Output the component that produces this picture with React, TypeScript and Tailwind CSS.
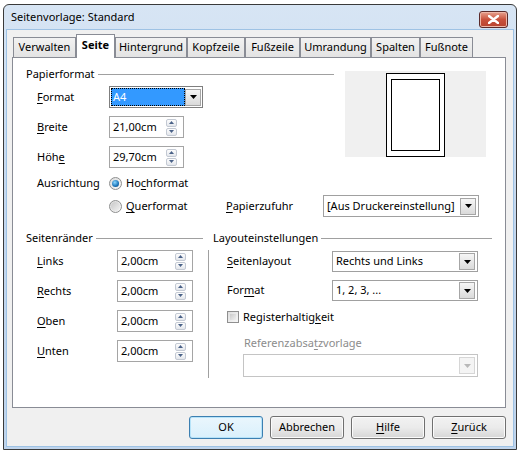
import React from 'react';

const U = ({ children }: { children: React.ReactNode }) => (
  <span className="underline underline-offset-[2px]">{children}</span>
);

const Tri = ({ up, color = '#4a6288' }: { up?: boolean; color?: string }) => (
  <svg width="5" height="3" viewBox="0 0 5 3">
    <path d={up ? 'M0 3L2.5 0L5 3Z' : 'M0 0H5L2.5 3Z'} fill={color} />
  </svg>
);

const Spin = () => (
  <div className="flex flex-col gap-px">
    <div className="flex h-[8px] w-[11px] items-center justify-center rounded-[2px] border border-[#c3c9d3] bg-gradient-to-b from-[#fdfdfd] to-[#e4e7ec]">
      <Tri up />
    </div>
    <div className="flex h-[8px] w-[11px] items-center justify-center rounded-[2px] border border-[#c3c9d3] bg-gradient-to-b from-[#fdfdfd] to-[#e4e7ec]">
      <Tri />
    </div>
  </div>
);

const SpinField = ({ value, className }: { value: string; className: string }) => (
  <div className={`flex h-[22px] items-center justify-between border border-[#a5a5a5] bg-white pl-[3px] pr-[6px] ${className}`}>
    <span>{value}</span>
    <Spin />
  </div>
);

const DropBtn = ({ disabled }: { disabled?: boolean }) => (
  <div
    className={`ml-auto flex h-[17px] w-[16px] items-center justify-center border ${
      disabled ? 'border-[#d6d6d6] bg-[#f4f4f4]' : 'border-[#a6a6a6] bg-gradient-to-b from-[#f6f6f6] to-[#dadada]'
    }`}
  >
    <svg width="7" height="4" viewBox="0 0 7 4">
      <path d="M0 0H7L3.5 4Z" fill={disabled ? '#b8b8b8' : '#000'} />
    </svg>
  </div>
);

const Combo = ({ text, className, disabled }: { text?: string; className: string; disabled?: boolean }) => (
  <div
    className={`flex items-center border bg-white pl-[3px] pr-[2px] ${
      disabled ? 'border-[#c4c4c4]' : 'border-[#a0a0a0]'
    } ${className}`}
  >
    <span className="whitespace-nowrap">{text}</span>
    <DropBtn disabled={disabled} />
  </div>
);

const Radio = ({ checked }: { checked?: boolean }) => (
  <div className="flex h-[13px] w-[13px] items-center justify-center rounded-full border border-[#8e8f8f] bg-gradient-to-br from-[#dcdcdc] to-[#f8f8f8]">
    {checked ? (
      <div className="h-[7px] w-[7px] rounded-full bg-[radial-gradient(circle_at_40%_35%,#8ad7ff,#1a73b8_60%,#0b3f6e)]" />
    ) : (
      <div className="h-[9px] w-[9px] rounded-full bg-gradient-to-br from-[#c8c8c8] to-[#f2f2f2]" />
    )}
  </div>
);

const Header = ({ label, className }: { label: string; className: string }) => (
  <div className={`flex h-[16px] items-center ${className}`}>
    <span className="whitespace-nowrap">{label}</span>
    <div className="ml-[3px] h-px flex-1 bg-[#a0a0a0]" />
  </div>
);

const tabs: { label: string; w: string; active?: boolean }[] = [
  { label: 'Verwalten', w: 'w-[63px]' },
  { label: 'Seite', w: 'w-[39px]', active: true },
  { label: 'Hintergrund', w: 'w-[72px]' },
  { label: 'Kopfzeile', w: 'w-[58px]' },
  { label: 'Fußzeile', w: 'w-[55px]' },
  { label: 'Umrandung', w: 'w-[71px]' },
  { label: 'Spalten', w: 'w-[49px]' },
  { label: 'Fußnote', w: 'w-[53px]' },
];

const Btn = ({ children, primary }: { children: React.ReactNode; primary?: boolean }) => (
  <div
    className={`flex h-[23px] w-[74px] items-center justify-center rounded-[3px] border ${
      primary
        ? 'border-[#3c7fb1] shadow-[inset_0_0_0_1px_#b6e3f9] bg-gradient-to-b from-[#eaf6fd] to-[#d9f0fc]'
        : 'border-[#707070] shadow-[inset_0_0_0_1px_#fbfbfb] bg-gradient-to-b from-[#f2f2f2] via-[#ebebeb] to-[#d6d6d6]'
    }`}
  >
    {children}
  </div>
);

export default function App() {
  return (
    <div className="h-[452px] w-[519px] bg-white pl-[3px] pt-[4px] font-['Noto_Sans',sans-serif] text-[11px] text-black">
      <div className="flex h-[446px] w-[514px] flex-col rounded-t-[6px] border border-[#3a3a3a] bg-gradient-to-b from-[#d7e5f4] via-[#c4d7ee] to-[#bfd4ec]">
        {/* title bar */}
        <div className="flex h-[24px] items-center justify-between pl-[7px] pr-[8px]">
          <span className="text-[11px] text-black">Seitenvorlage: Standard</span>
          <div className="mt-[4px] flex h-[17px] w-[29px] items-center justify-center rounded-[3px] border border-[#5b2a2a] bg-gradient-to-b from-[#e6a18f] via-[#c9513c] to-[#b8432f] shadow-[inset_0_0_0_1px_#eeb7a8]">
            <svg width="11" height="9" viewBox="0 0 11 9">
              <path d="M1 1L10 8M10 1L1 8" stroke="#fff" strokeWidth="2.4" strokeLinecap="round" />
            </svg>
          </div>
        </div>

        {/* client */}
        <div className="mx-[2px] mb-[2px] flex-1 border border-[#9ec2e4] bg-[#f0f0f0] pl-[5px]">
          {/* tabs */}
          <div className="relative z-10 mt-[4px] -mb-px flex h-[24px] items-end pl-px">
            {tabs.map((t) =>
              t.active ? (
                <div
                  key={t.label}
                  className={`flex h-[24px] items-center justify-center border border-b-0 border-[#898c95] bg-white pb-[2px] font-bold ${t.w}`}
                >
                  {t.label}
                </div>
              ) : (
                <div
                  key={t.label}
                  className={`flex h-[21px] items-center justify-center border border-[#898c95] bg-gradient-to-b from-[#f2f2f2] to-[#e3e3e3] ${t.w}`}
                >
                  {t.label}
                </div>
              )
            )}
          </div>

          {/* panel */}
          <div className="h-[351px] w-[494px] border border-[#898c95] bg-white">
            <div className="flex">
              <div className="ml-[13px] w-[308px]">
                <Header label="Papierformat" className="mt-[8px]" />
                <div className="mt-[4px] flex items-center">
                  <span className="ml-[11px] w-[72px]">
                    <U>F</U>ormat
                  </span>
                  <div className="flex h-[22px] w-[94px] items-center border border-[#7f7f7f] bg-white p-px">
                    <div className="flex h-full flex-1 items-center bg-[#3399ff] pl-[2px] text-white outline outline-1 -outline-offset-1 outline-dotted outline-black">
                      A4
                    </div>
                    <DropBtn />
                  </div>
                </div>
                <div className="mt-[8px] flex items-center">
                  <span className="ml-[11px] w-[72px]">
                    <U>B</U>reite
                  </span>
                  <SpinField value="21,00cm" className="w-[75px]" />
                </div>
                <div className="mt-[8px] flex items-center">
                  <span className="ml-[11px] w-[72px]">
                    Höh<U>e</U>
                  </span>
                  <SpinField value="29,70cm" className="w-[75px]" />
                </div>
                <div className="mt-[6px] flex h-[18px] items-center">
                  <span className="ml-[11px] w-[72px]">Ausrichtung</span>
                  <Radio checked />
                  <span className="ml-[4px]">
                    Ho<U>c</U>hformat
                  </span>
                </div>
              </div>
              <div className="ml-[11px] mt-[13px] flex h-[86px] w-[141px] justify-center bg-[#f0f0f0] pt-[2px]">
                <div className="flex h-[84px] w-[59px] border border-black bg-white px-[4px] pb-[5px] pt-[5px]">
                  <div className="flex-1 border border-black" />
                </div>
              </div>
            </div>

            <div className="mt-[3px] flex h-[22px] items-center pl-[96px]">
              <div className="flex w-[117px] items-center">
                <Radio />
                <span className="ml-[4px]">
                  <U>Q</U>uerformat
                </span>
              </div>
              <span className="w-[97px]">
                <U>P</U>apierzufuhr
              </span>
              <Combo text="[Aus Druckereinstellung]" className="h-[22px] w-[156px]" />
            </div>

            <div className="mt-[13px] flex">
              <Header label="Seitenränder" className="ml-[13px] w-[177px]" />
              <Header label="Layouteinstellungen" className="ml-[10px] w-[279px]" />
            </div>

            <div className="mt-[4px] flex">
              <div className="flex w-[195px] flex-col gap-[8px]">
                {[
                  ['L', 'inks'],
                  ['R', 'echts'],
                  ['O', 'ben'],
                  ['U', 'nten'],
                ].map(([a, b]) => (
                  <div key={a} className="flex items-center">
                    <span className="ml-[24px] w-[80px]">
                      <U>{a}</U>
                      {b}
                    </span>
                    <SpinField value="2,00cm" className="w-[76px]" />
                  </div>
                ))}
              </div>
              <div className="h-[128px] border-l border-[#a0a0a0] pl-[18px]">
                <div className="mt-px flex items-center">
                  <span className="w-[105px]">
                    <U>S</U>eitenlayout
                  </span>
                  <Combo text="Rechts und Links" className="h-[21px] w-[146px]" />
                </div>
                <div className="mt-[8px] flex items-center">
                  <span className="w-[105px]">
                    For<U>m</U>at
                  </span>
                  <Combo text="1, 2, 3, ..." className="h-[21px] w-[146px]" />
                </div>
                <div className="mt-[9px] flex h-[14px] items-center">
                  <div className="h-[12px] w-[12px] border border-[#8f8f8f] bg-gradient-to-br from-[#dedede] to-[#f7f7f7] p-[2px]">
                    <div className="h-full w-full bg-gradient-to-br from-[#cbcbcb] to-[#f0f0f0]" />
                  </div>
                  <span className="ml-[4px]">
                    Registerhaltig<U>k</U>eit
                  </span>
                </div>
                <div className="ml-[17px] mt-[11px] h-[16px] leading-[16px] text-[#8c8c8c]">
                  Referenzabsa<U>t</U>zvorlage
                </div>
                <Combo className="ml-[16px] mt-[3px] h-[23px] w-[235px]" disabled />
              </div>
            </div>
          </div>

          {/* buttons */}
          <div className="mt-[8px] flex w-[494px] justify-end gap-[7px]">
            <Btn primary>OK</Btn>
            <Btn>Abbrechen</Btn>
            <Btn>
              <U>H</U>ilfe
            </Btn>
            <Btn>
              <U>Z</U>urück
            </Btn>
          </div>
        </div>
      </div>
    </div>
  );
}
